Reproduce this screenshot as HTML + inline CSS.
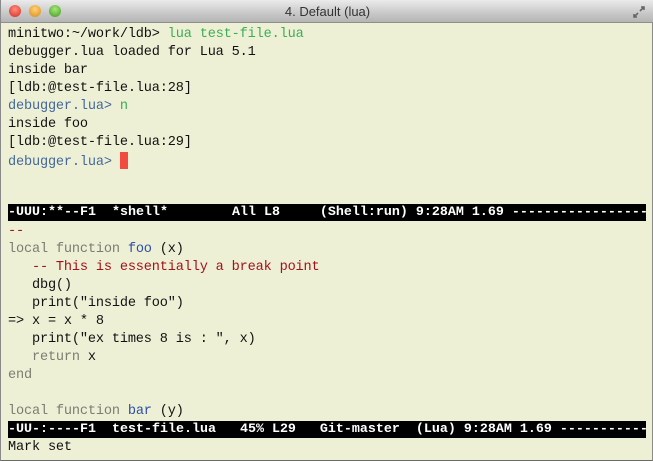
<!DOCTYPE html>
<html><head><style>
html,body{margin:0;padding:0;width:653px;height:461px;overflow:hidden;background:#ececd3}
.win{position:absolute;left:0;top:0;width:653px;height:461px;background:#eef0d6;box-sizing:border-box;border-left:1px solid #8a8a8a;border-right:1px solid #8a8a8a;border-bottom:1px solid #6a6a6a}
.title{position:absolute;left:0;top:0;width:653px;height:23px;background:linear-gradient(#ebebeb,#c8c8c8 60%,#b5b5b5);border-bottom:1px solid #8e8e8e;box-sizing:border-box;font:13px "Liberation Sans",sans-serif;color:#333;text-align:center;line-height:23px}
.dot{position:absolute;top:5px;width:12px;height:12px;border-radius:50%}
.t{position:absolute;left:7px;font:13.6px/18px "Liberation Mono",monospace;letter-spacing:-0.17px;color:#111;white-space:pre}
.g{color:#3aae55}.p{color:#44689a}.k{color:#7c7c72}.f{color:#2b50a6}.c{color:#a3121a}
.ml{position:absolute;left:7px;width:638px;height:17px;background:#000;color:#fff;font:bold 13.33px/17px "Liberation Mono",monospace;white-space:pre;overflow:hidden}
.cur{display:inline-block;width:8px;height:17px;background:#f24a3e;vertical-align:-4px}
</style></head><body>
<div class="win">
<div class="title">4. Default (lua)
<div class="dot" style="left:8px;background:radial-gradient(circle at 50% 35%,#ff8f80,#d8281e)"></div>
<div class="dot" style="left:28px;background:radial-gradient(circle at 50% 35%,#ffd27a,#d98a10)"></div>
<div class="dot" style="left:48px;background:radial-gradient(circle at 50% 35%,#a6e87a,#3c9a1a)"></div>
<svg style="position:absolute;right:8px;top:5px" width="14" height="14" viewBox="0 0 14 14"><path d="M8 6 L12 2 M9 2 H12 V5 M6 8 L2 12 M2 9 V12 H5" stroke="#666" stroke-width="1.6" fill="none"/></svg>
</div>
<div class="t" style="top:26px">minitwo:~/work/ldb&gt; <span class="g">lua test-file.lua</span>
debugger.lua loaded for Lua 5.1
inside bar
[ldb:@test-file.lua:28]
<span class="p">debugger.lua&gt;</span> <span class="g">n</span>
inside foo
[ldb:@test-file.lua:29]
<span class="p">debugger.lua&gt;</span> <span class="cur"></span></div>
<div class="ml" style="top:204px">-UUU:**--F1  *shell*        All L8     (Shell:run) 9:28AM 1.69 ------------------</div>
<div class="t" style="top:223px"><span class="c">--</span>
<span class="k">local function</span> <span class="f">foo</span> (x)
   <span class="c">-- This is essentially a break point</span>
   dbg()
   print("inside foo")
=&gt; x = x * 8
   print("ex times 8 is : ", x)
   <span class="k">return</span> x
<span class="k">end</span>

<span class="k">local function</span> <span class="f">bar</span> (y)</div>
<div class="ml" style="top:421px">-UU-:----F1  test-file.lua   45% L29   Git-master  (Lua) 9:28AM 1.69 ------------------</div>
<div class="t" style="top:439px">Mark set</div>
</div>
</body></html>
